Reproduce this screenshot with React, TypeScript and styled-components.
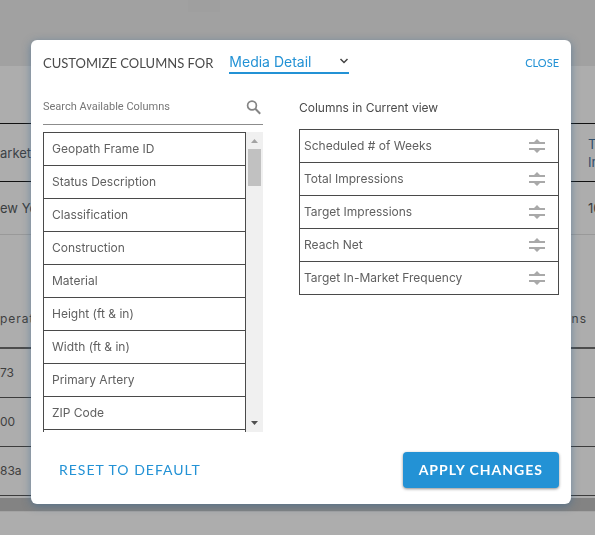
import React from "react";
import styled, { createGlobalStyle } from "styled-components";

const BLUE = "#2392d5";
const INK = "#4a4a4a";
const DISPLAY = "Lato, sans-serif";

const GlobalStyle = createGlobalStyle`
  * { box-sizing: border-box; }
  html, body, #root { height: 100%; }
  body {
    margin: 0;
    background: #adadad;
    color: ${INK};
    font-family: Inter, Roboto, sans-serif;
    font-size: 12px;
    line-height: 16px;
    overflow: hidden;
  }
  button, input, select { font: inherit; }
`;

const Page = styled.main`
  height: 100%;
  overflow: hidden;
`;

const Banner = styled.header`
  display: flex;
  height: 66px;
  padding-left: 188px;
  background: #a1a1a1;
`;

const BannerTab = styled.div`
  width: 32px;
  height: 12px;
  background: #9f9f9f;
`;

const Clip = styled.section`
  overflow: hidden;
`;

const SummaryTable = styled.table`
  width: calc(100% + 51px);
  margin-top: 57px;
  border-collapse: separate;
  border-spacing: 0;
  border-top: 1px solid #111;
  table-layout: fixed;
  color: #3a3d40;
  font-size: 13px;
  line-height: 18px;
`;

const SummaryHead = styled.th<{ $end?: boolean }>`
  width: ${(p) => (p.$end ? "58px" : "auto")};
  height: 58px;
  padding: 0;
  border-bottom: 1px solid #111;
  color: ${(p) => (p.$end ? "#2d4e6c" : "#3c4247")};
  font-weight: 400;
  text-align: left;
`;

const SummaryCell = styled.td`
  height: 53px;
  padding: 0;
  border-bottom: 1px solid #999;
`;

const DetailTable = styled.table`
  width: 100%;
  margin-top: 56px;
  border-collapse: separate;
  border-spacing: 0;
  table-layout: fixed;
  color: #3f3f3f;
  font-size: 12px;
`;

const DetailHead = styled.th<{ $right?: boolean }>`
  height: 58px;
  padding: 0 8px 0 0;
  border-bottom: 2px solid #4c4c4c;
  font-weight: 400;
  letter-spacing: 1px;
  text-align: ${(p) => (p.$right ? "right" : "left")};
`;

const DetailCell = styled.td`
  height: 49px;
  padding: 0;
  border-bottom: 1px solid #3c3c3c;
`;

const ScrollTrack = styled.div`
  height: 14px;
  margin-top: 2px;
  background: #838383;
  border-bottom: 1px solid #a3a3a3;
`;

const Overlay = styled.div`
  position: fixed;
  inset: 0;
  padding: 40px 24px 31px 31px;
`;

const Dialog = styled.section`
  display: flex;
  flex-direction: column;
  padding: 12px 12px 16px;
  border-radius: 6px;
  background: #fff;
  box-shadow: 0 2px 8px rgba(40, 95, 145, 0.5);
`;

const DialogHead = styled.header`
  display: flex;
  align-items: center;
  gap: 16px;
  height: 22px;
  font-family: ${DISPLAY};
`;

const Title = styled.label`
  font-size: 13px;
`;

const ViewPicker = styled.div`
  position: relative;
  width: 120px;
`;

const ViewSelect = styled.select`
  display: block;
  width: 100%;
  height: 22px;
  padding: 0;
  border: 0;
  border-bottom: 2px solid ${BLUE};
  border-radius: 0;
  background: transparent;
  color: ${BLUE};
  font-family: Inter, Roboto, sans-serif;
  font-size: 14px;
  appearance: none;
  outline: none;
`;

const PickerArrow = styled.svg`
  position: absolute;
  top: 6px;
  right: 0;
  pointer-events: none;
`;

const CloseButton = styled.button`
  margin-left: auto;
  padding: 0;
  border: 0;
  background: none;
  color: ${BLUE};
  font-size: 11px;
`;

const Columns = styled.div`
  display: grid;
  grid-template-columns: 220fr 260fr;
  gap: 36px;
  align-items: start;
  margin-top: 16px;
`;

const SearchBox = styled.label`
  display: flex;
  align-items: center;
  height: 35px;
  border-bottom: 1px solid #8c8c8c;
`;

const SearchInput = styled.input`
  flex: 1;
  min-width: 0;
  padding: 0;
  border: 0;
  outline: none;
  background: none;
  color: ${INK};
  font-family: Roboto, sans-serif;
  font-size: 11px;
  &::placeholder { color: #777; opacity: 1; }
`;

const ScrollPane = styled.div`
  display: flex;
  height: 300px;
  margin-top: 7px;
`;

const AvailableList = styled.ul`
  flex: 1;
  height: 100%;
  margin: 0;
  padding: 0;
  border: 1px solid ${INK};
  border-bottom: 0;
  list-style: none;
  overflow-y: auto;
  scrollbar-width: none;
`;

const AvailableItem = styled.li`
  display: flex;
  align-items: center;
  height: 33px;
  padding: 0 8px;
  border-bottom: 1px solid ${INK};
  color: #606060;
`;

const ScrollBar = styled.div`
  display: flex;
  flex-direction: column;
  align-items: center;
  width: 17px;
  background: #f0f0f0;
`;

const ScrollThumb = styled.div`
  flex: 1;
  width: 13px;
  max-height: 37px;
  margin-bottom: auto;
  background: #c1c1c1;
`;

const CurrentTitle = styled.h2`
  margin: 0;
  padding: 10px 0 13px;
  font-size: 12px;
  font-weight: 400;
`;

const CurrentList = styled.ul`
  margin: 0;
  padding: 0;
  border: 1px solid ${INK};
  list-style: none;
`;

const CurrentItem = styled.li`
  display: flex;
  align-items: center;
  justify-content: space-between;
  height: 33px;
  padding: 0 13px 0 4px;
  color: #606060;
  & + & { border-top: 1px solid ${INK}; }
  &:first-child { height: 32px; }
`;

const DragButton = styled.button`
  display: flex;
  padding: 0;
  border: 0;
  background: none;
`;

const Actions = styled.footer`
  display: flex;
  justify-content: space-between;
  margin-top: 20px;
`;

const ActionButton = styled.button<{ $primary?: boolean }>`
  height: 36px;
  padding: 0 16px;
  border: 0;
  border-radius: 4px;
  background: ${(p) => (p.$primary ? BLUE : "transparent")};
  box-shadow: ${(p) => (p.$primary ? "0 1px 3px rgba(0, 0, 0, 0.45)" : "none")};
  color: ${(p) => (p.$primary ? "#fff" : BLUE)};
  font-family: ${DISPLAY};
  font-size: 14px;
  font-weight: ${(p) => (p.$primary ? 700 : 400)};
  letter-spacing: 1px;
  white-space: nowrap;
`;

const available = [
  "Geopath Frame ID",
  "Status Description",
  "Classification",
  "Construction",
  "Material",
  "Height (ft & in)",
  "Width (ft & in)",
  "Primary Artery",
  "ZIP Code",
  "",
];

const current = [
  "Scheduled # of Weeks",
  "Total Impressions",
  "Target Impressions",
  "Reach Net",
  "Target In-Market Frequency",
];

const SearchIcon = () => (
  <svg width="18" height="18" viewBox="0 0 18 18" fill="none" stroke="#858585" aria-hidden="true">
    <circle cx="7" cy="7.5" r="4.4" strokeWidth="1.7" />
    <path d="M10.3 10.8 L15.2 15.7" strokeWidth="2" />
  </svg>
);

const DragIcon = () => (
  <svg width="16" height="14" viewBox="0 0 16 14" fill="#a9a9a9" aria-hidden="true">
    <path d="M0 3H5L8 0L11 3H16V5H0Z" />
    <path d="M0 9H16V11H11L8 14L5 11H0Z" />
  </svg>
);

const ScrollArrow = ({ down }: { down?: boolean }) => (
  <svg width="17" height="17" viewBox="0 0 17 17" aria-hidden="true">
    {down ? <path d="M5 6H12L8.5 10Z" fill="#505050" /> : <path d="M5 11H12L8.5 7Z" fill="#a3a3a3" />}
  </svg>
);

export default function App() {
  return (
    <>
      <GlobalStyle />
      <Page>
        <Banner>
          <BannerTab />
        </Banner>
        <Clip>
          <SummaryTable>
            <thead>
              <tr>
                <SummaryHead>arket</SummaryHead>
                <SummaryHead $end>
                  T<br />
                  In
                </SummaryHead>
              </tr>
            </thead>
            <tbody>
              <tr>
                <SummaryCell>ew Yo</SummaryCell>
                <SummaryCell>10</SummaryCell>
              </tr>
            </tbody>
          </SummaryTable>
          <DetailTable>
            <thead>
              <tr>
                <DetailHead>perato</DetailHead>
                <DetailHead $right>ns</DetailHead>
              </tr>
            </thead>
            <tbody>
              {["73", "00", "83a"].map((id) => (
                <tr key={id}>
                  <DetailCell>{id}</DetailCell>
                  <DetailCell />
                </tr>
              ))}
            </tbody>
          </DetailTable>
          <ScrollTrack />
        </Clip>
      </Page>
      <Overlay>
        <Dialog role="dialog" aria-labelledby="dialog-title">
          <DialogHead>
            <Title id="dialog-title" htmlFor="view">
              CUSTOMIZE COLUMNS FOR
            </Title>
            <ViewPicker>
              <ViewSelect id="view" defaultValue="detail">
                <option value="detail">Media Detail</option>
              </ViewSelect>
              <PickerArrow width="10" height="7" viewBox="0 0 10 7" fill="none" stroke="#444" strokeWidth="1.5" aria-hidden="true">
                <path d="M1.5 1L5 4.5L8.5 1" />
              </PickerArrow>
            </ViewPicker>
            <CloseButton type="button">CLOSE</CloseButton>
          </DialogHead>
          <Columns>
            <div>
              <SearchBox>
                <SearchInput type="text" placeholder="Search Available Columns" aria-label="Search Available Columns" />
                <SearchIcon />
              </SearchBox>
              <ScrollPane>
                <AvailableList>
                  {available.map((name) => (
                    <AvailableItem key={name}>{name}</AvailableItem>
                  ))}
                </AvailableList>
                <ScrollBar>
                  <ScrollArrow />
                  <ScrollThumb />
                  <ScrollArrow down />
                </ScrollBar>
              </ScrollPane>
            </div>
            <div>
              <CurrentTitle>Columns in Current view</CurrentTitle>
              <CurrentList>
                {current.map((name) => (
                  <CurrentItem key={name}>
                    {name}
                    <DragButton type="button" aria-label={`Move ${name}`}>
                      <DragIcon />
                    </DragButton>
                  </CurrentItem>
                ))}
              </CurrentList>
            </div>
          </Columns>
          <Actions>
            <ActionButton type="button">RESET TO DEFAULT</ActionButton>
            <ActionButton type="button" $primary>
              APPLY CHANGES
            </ActionButton>
          </Actions>
        </Dialog>
      </Overlay>
    </>
  );
}
